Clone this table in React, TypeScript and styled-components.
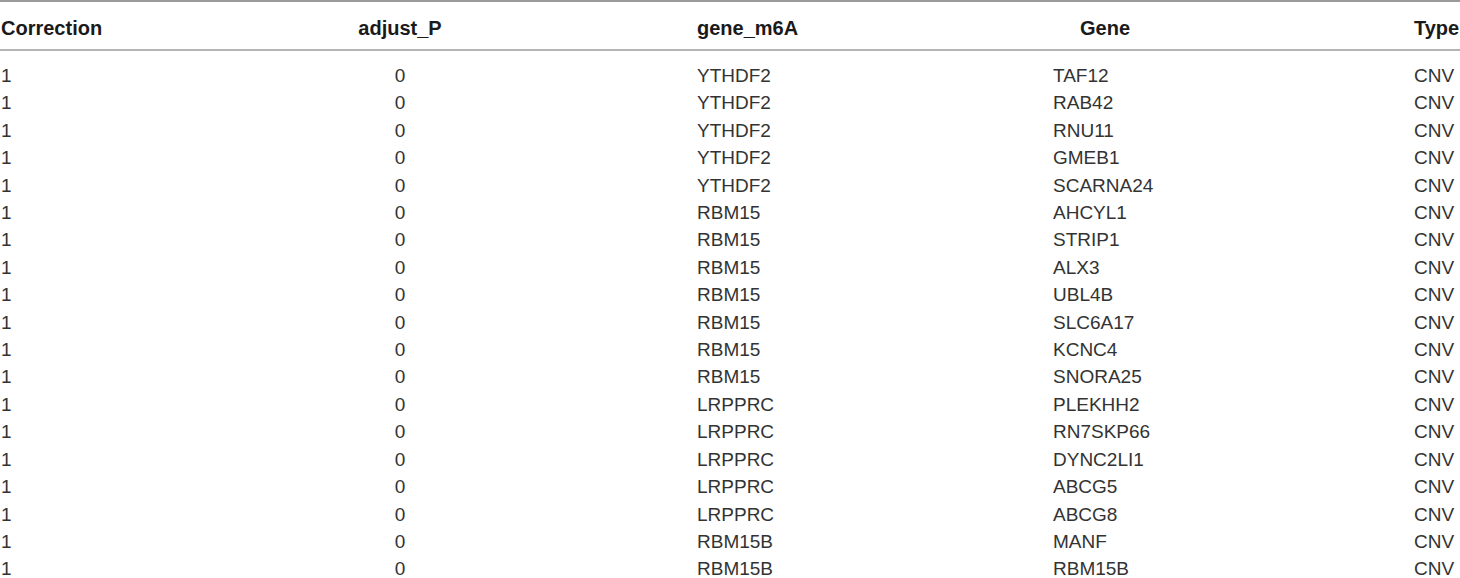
import React from "react";
import styled, { createGlobalStyle } from "styled-components";

const Global = createGlobalStyle`
  html, body { margin: 0; padding: 0; background: #ffffff; }
  body { font-family: "Liberation Sans", Arial, Helvetica, sans-serif; }
`;

const Table = styled.table`
  width: 1460px;
  table-layout: fixed;
  border-collapse: collapse;
  border-top: 2px solid #9a9a9a;
  font-family: "Liberation Sans", Arial, Helvetica, sans-serif;
  font-size: 19px;
  color: #333333;
`;

const HeadRow = styled.tr`
  height: 49px;
  border-bottom: 2px solid #b4b4b4;
`;

const HeadCell = styled.th<{ $align?: string; $pad?: number }>`
  font-weight: bold;
  font-size: 20px;
  color: #1a1a1a;
  text-align: ${(p) => p.$align || "left"};
  padding: 6px 0 0 ${(p) => p.$pad || 0}px;
  vertical-align: middle;
  white-space: nowrap;
`;

const Spacer = styled.tr`
  height: 12px;
`;

const Row = styled.tr`
  height: 27.4px;
`;

const Cell = styled.td<{ $align?: string; $pad?: number }>`
  text-align: ${(p) => p.$align || "left"};
  padding: 0 0 0 ${(p) => p.$pad || 0}px;
  line-height: 27.4px;
  white-space: nowrap;
`;

const rows: [string, string][] = [
  ["YTHDF2", "TAF12"],
  ["YTHDF2", "RAB42"],
  ["YTHDF2", "RNU11"],
  ["YTHDF2", "GMEB1"],
  ["YTHDF2", "SCARNA24"],
  ["RBM15", "AHCYL1"],
  ["RBM15", "STRIP1"],
  ["RBM15", "ALX3"],
  ["RBM15", "UBL4B"],
  ["RBM15", "SLC6A17"],
  ["RBM15", "KCNC4"],
  ["RBM15", "SNORA25"],
  ["LRPPRC", "PLEKHH2"],
  ["LRPPRC", "RN7SKP66"],
  ["LRPPRC", "DYNC2LI1"],
  ["LRPPRC", "ABCG5"],
  ["LRPPRC", "ABCG8"],
  ["RBM15B", "MANF"],
  ["RBM15B", "RBM15B"],
];

export default function App() {
  return (
    <>
      <Global />
      <Table>
        <colgroup>
          <col style={{ width: 300 }} />
          <col style={{ width: 200 }} />
          <col style={{ width: 553 }} />
          <col style={{ width: 361 }} />
          <col style={{ width: 46 }} />
        </colgroup>
        <thead>
          <HeadRow>
            <HeadCell $pad={1}>Correction</HeadCell>
            <HeadCell $align="center">adjust_P</HeadCell>
            <HeadCell $pad={197}>gene_m6A</HeadCell>
            <HeadCell $pad={27}>Gene</HeadCell>
            <HeadCell>Type</HeadCell>
          </HeadRow>
        </thead>
        <tbody>
          <Spacer />
          {rows.map(([m6a, gene], i) => (
            <Row key={i}>
              <Cell $pad={1}>1</Cell>
              <Cell $align="center">0</Cell>
              <Cell $pad={197}>{m6a}</Cell>
              <Cell>{gene}</Cell>
              <Cell>CNV</Cell>
            </Row>
          ))}
        </tbody>
      </Table>
    </>
  );
}
